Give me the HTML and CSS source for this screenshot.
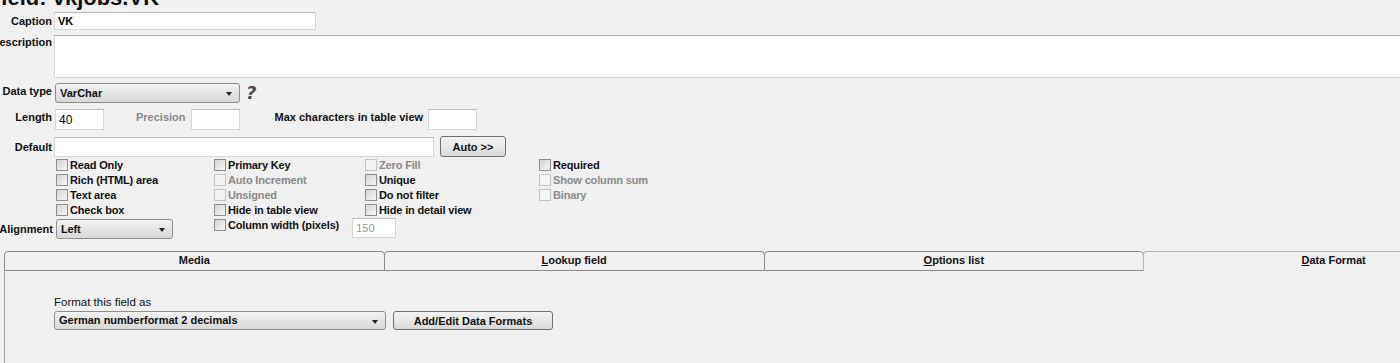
FILE: index.html
```html
<!DOCTYPE html>
<html>
  <head>
    <title>field: vkjobs.VK</title>
    <link rel="stylesheet" href="styles.css">
  </head>
  <body>
    <main class="page">
      <h1 class="title">field: vkjobs.VK</h1>

      <div class="row row-caption">
        <label class="lbl">Caption</label>
        <input type="text" class="field field-caption" value="VK">
      </div>

      <div class="row row-desc">
        <label class="lbl lbl-top">Description</label>
        <textarea class="field field-desc"></textarea>
      </div>

      <div class="row row-type">
        <label class="lbl lbl-high">Data type</label>
        <div class="select select-type">VarChar<span class="arrow"></span></div>
        <span class="help">?</span>
      </div>

      <div class="row row-length">
        <label class="lbl lbl-high">Length</label>
        <input type="text" class="field field-small field-length" value="40">
        <label class="lbl-inline lbl-high lbl-disabled lbl-precision">Precision</label>
        <input type="text" class="field field-small">
        <label class="lbl-inline lbl-high lbl-max">Max characters in table view</label>
        <input type="text" class="field field-small">
      </div>

      <div class="row row-default">
        <label class="lbl">Default</label>
        <input type="text" class="field field-default">
        <button class="btn btn-auto">Auto &gt;&gt;</button>
      </div>

      <div class="checks">
        <span class="cell-empty"></span>
        <label class="check"><span class="box"></span>Read Only</label>
        <label class="check"><span class="box"></span>Primary Key</label>
        <label class="check disabled"><span class="box"></span>Zero Fill</label>
        <label class="check"><span class="box"></span>Required</label>

        <span class="cell-empty"></span>
        <label class="check"><span class="box"></span>Rich (HTML) area</label>
        <label class="check disabled"><span class="box"></span>Auto Increment</label>
        <label class="check"><span class="box"></span>Unique</label>
        <label class="check disabled"><span class="box"></span>Show column sum</label>

        <span class="cell-empty"></span>
        <label class="check"><span class="box"></span>Text area</label>
        <label class="check disabled"><span class="box"></span>Unsigned</label>
        <label class="check"><span class="box"></span>Do not filter</label>
        <label class="check disabled"><span class="box"></span>Binary</label>

        <span class="cell-empty"></span>
        <label class="check"><span class="box"></span>Check box</label>
        <label class="check"><span class="box"></span>Hide in table view</label>
        <label class="check"><span class="box"></span>Hide in detail view</label>
        <span class="cell-empty"></span>

        <label class="lbl lbl-grid">Alignment</label>
        <div class="select select-align">Left<span class="arrow"></span></div>
        <div class="colwidth">
          <label class="check"><span class="box"></span>Column width (pixels)</label>
          <input type="text" class="field field-width" value="150" disabled>
        </div>
      </div>

      <div class="tabs">
        <div class="tab">Media</div>
        <div class="tab"><u>L</u>ookup field</div>
        <div class="tab"><u>O</u>ptions list</div>
        <div class="tab tab-active"><u>D</u>ata Format</div>
      </div>
      <div class="panel">
        <div class="panel-label">Format this field as</div>
        <div class="row">
          <div class="select select-format">German numberformat 2 decimals<span class="arrow"></span></div>
          <button class="btn btn-formats">Add/Edit Data Formats</button>
        </div>
      </div>
    </main>
  </body>
</html>
```

FILE: styles.css
```css
html,
body {
  margin: 0;
  overflow: hidden;
  background: #f0f0f0;
}

body {
  font-family: "Liberation Sans", Arial, sans-serif;
  font-size: 11px;
  font-weight: bold;
  color: #111;
}

.page {
  width: 1530px;
}

.title {
  margin: -13px 0 0 -6px;
  height: 20px;
  font-size: 22px;
  line-height: 22px;
  color: #111;
}

.row {
  display: flex;
  align-items: center;
}

.lbl {
  flex: none;
  width: 52px;
  margin-right: 2px;
  display: flex;
  justify-content: flex-end;
  white-space: nowrap;
}

.lbl-top {
  align-self: flex-start;
  padding-top: 1px;
}

.lbl-high {
  margin-bottom: 5px;
}

.lbl-inline {
  white-space: nowrap;
  margin-right: 5px;
}

.lbl-disabled {
  color: #8a8a8a;
}

.lbl-precision {
  margin-left: 32px;
}

.lbl-max {
  margin-left: 35px;
}

.field {
  box-sizing: border-box;
  background: #fff;
  border: 1px solid #d6d6d6;
  border-top-color: #b9b9b9;
  font-family: inherit;
  font-size: 11px;
  padding: 0 3px;
  margin: 0;
  outline: none;
}

.row-caption {
  margin-top: 5px;
}

.field-caption {
  width: 262px;
  height: 18px;
  font-weight: bold;
}

.row-desc {
  margin-top: 5px;
}

.field-desc {
  flex: none;
  width: 1400px;
  height: 43px;
  resize: none;
  border-top-color: #a8a8a8;
}

.row-type {
  margin-top: 5px;
}

.select {
  position: relative;
  box-sizing: border-box;
  height: 20px;
  line-height: 18px;
  padding: 0 4px;
  border: 1px solid #8f8f8f;
  border-radius: 3px;
  background: linear-gradient(#f4f4f4, #e3e3e3 50%, #d9d9d9);
  white-space: nowrap;
  margin-left: 1px;
}

.arrow {
  position: absolute;
  right: 7px;
  top: 8px;
  border-left: 3px solid transparent;
  border-right: 3px solid transparent;
  border-top: 4px solid #222;
}

.select-type {
  width: 185px;
}

.help {
  margin-left: 6px;
  font-family: "DejaVu Sans", sans-serif;
  font-size: 18px;
  font-weight: 900;
  font-style: italic;
  color: #4a4a4a;
  line-height: 18px;
}

.row-length {
  margin-top: 6px;
}

.field-small {
  width: 49px;
  height: 21px;
  font-size: 12px;
  font-weight: normal;
}

.field-length {
  margin-left: 1px;
}

.row-default {
  margin-top: 6px;
}

.field-default {
  width: 380px;
  height: 20px;
}

.btn {
  box-sizing: border-box;
  border: 1px solid #707070;
  border-radius: 3px;
  background: linear-gradient(#f3f3f3, #e8e8e8 50%, #d8d8d8);
  font-family: inherit;
  font-size: 11px;
  font-weight: bold;
  color: #111;
  padding: 0;
}

.btn-auto {
  width: 66px;
  height: 21px;
  margin-left: 6px;
}

.checks {
  display: grid;
  grid-template-columns: 55px 158px 151px 174px 200px;
  grid-template-rows: repeat(4, 15px) 22px;
  margin-top: 0;
  letter-spacing: -0.15px;
}

.check {
  display: flex;
  align-items: center;
  gap: 2px;
  white-space: nowrap;
}

.box {
  flex: none;
  box-sizing: border-box;
  width: 12px;
  height: 12px;
  margin-left: 1px;
  border: 1px solid #8e8e8e;
  background: linear-gradient(135deg, #d4d4d4, #f6f6f6);
}

.check.disabled {
  color: #8a8a8a;
}

.check.disabled .box {
  border-color: #c4c4c4;
  background: #f4f4f4;
}

.lbl-grid {
  width: 53px;
  align-self: end;
  height: 20px;
  align-items: center;
  letter-spacing: 0;
}

.select-align {
  align-self: end;
  width: 117px;
}

.colwidth {
  display: flex;
  align-items: flex-start;
  padding-top: 1px;
}

.colwidth .check {
  align-items: flex-start;
  padding-top: 1px;
}

.field-width {
  width: 44px;
  height: 20px;
  margin-left: 13px;
  background: #fff;
  color: #999;
  font-weight: normal;
}

.tabs {
  display: flex;
  margin: 12px 0 0 4px;
  width: 1520px;
}

.tab {
  flex: 1;
  box-sizing: border-box;
  height: 20px;
  line-height: 17px;
  text-align: center;
  border: 1px solid #8c8c8c;
  border-radius: 4px 4px 0 0;
  margin-left: -1px;
  background: #f0f0f0;
}

.tab:first-child {
  margin-left: 0;
}

.tab-active {
  border-color: #b8b8b8;
  border-bottom: none;
}

.panel {
  margin-left: 4px;
  height: 100px;
  border-left: 1px solid #a0a0a0;
  padding: 25px 0 0 49px;
}

.panel-label {
  font-weight: normal;
  font-size: 11.5px;
  margin-bottom: 3px;
}

.select-format {
  width: 332px;
  margin-left: 0;
  height: 19px;
  line-height: 17px;
}

.btn-formats {
  width: 160px;
  height: 19px;
  margin-left: 7px;
}
```
